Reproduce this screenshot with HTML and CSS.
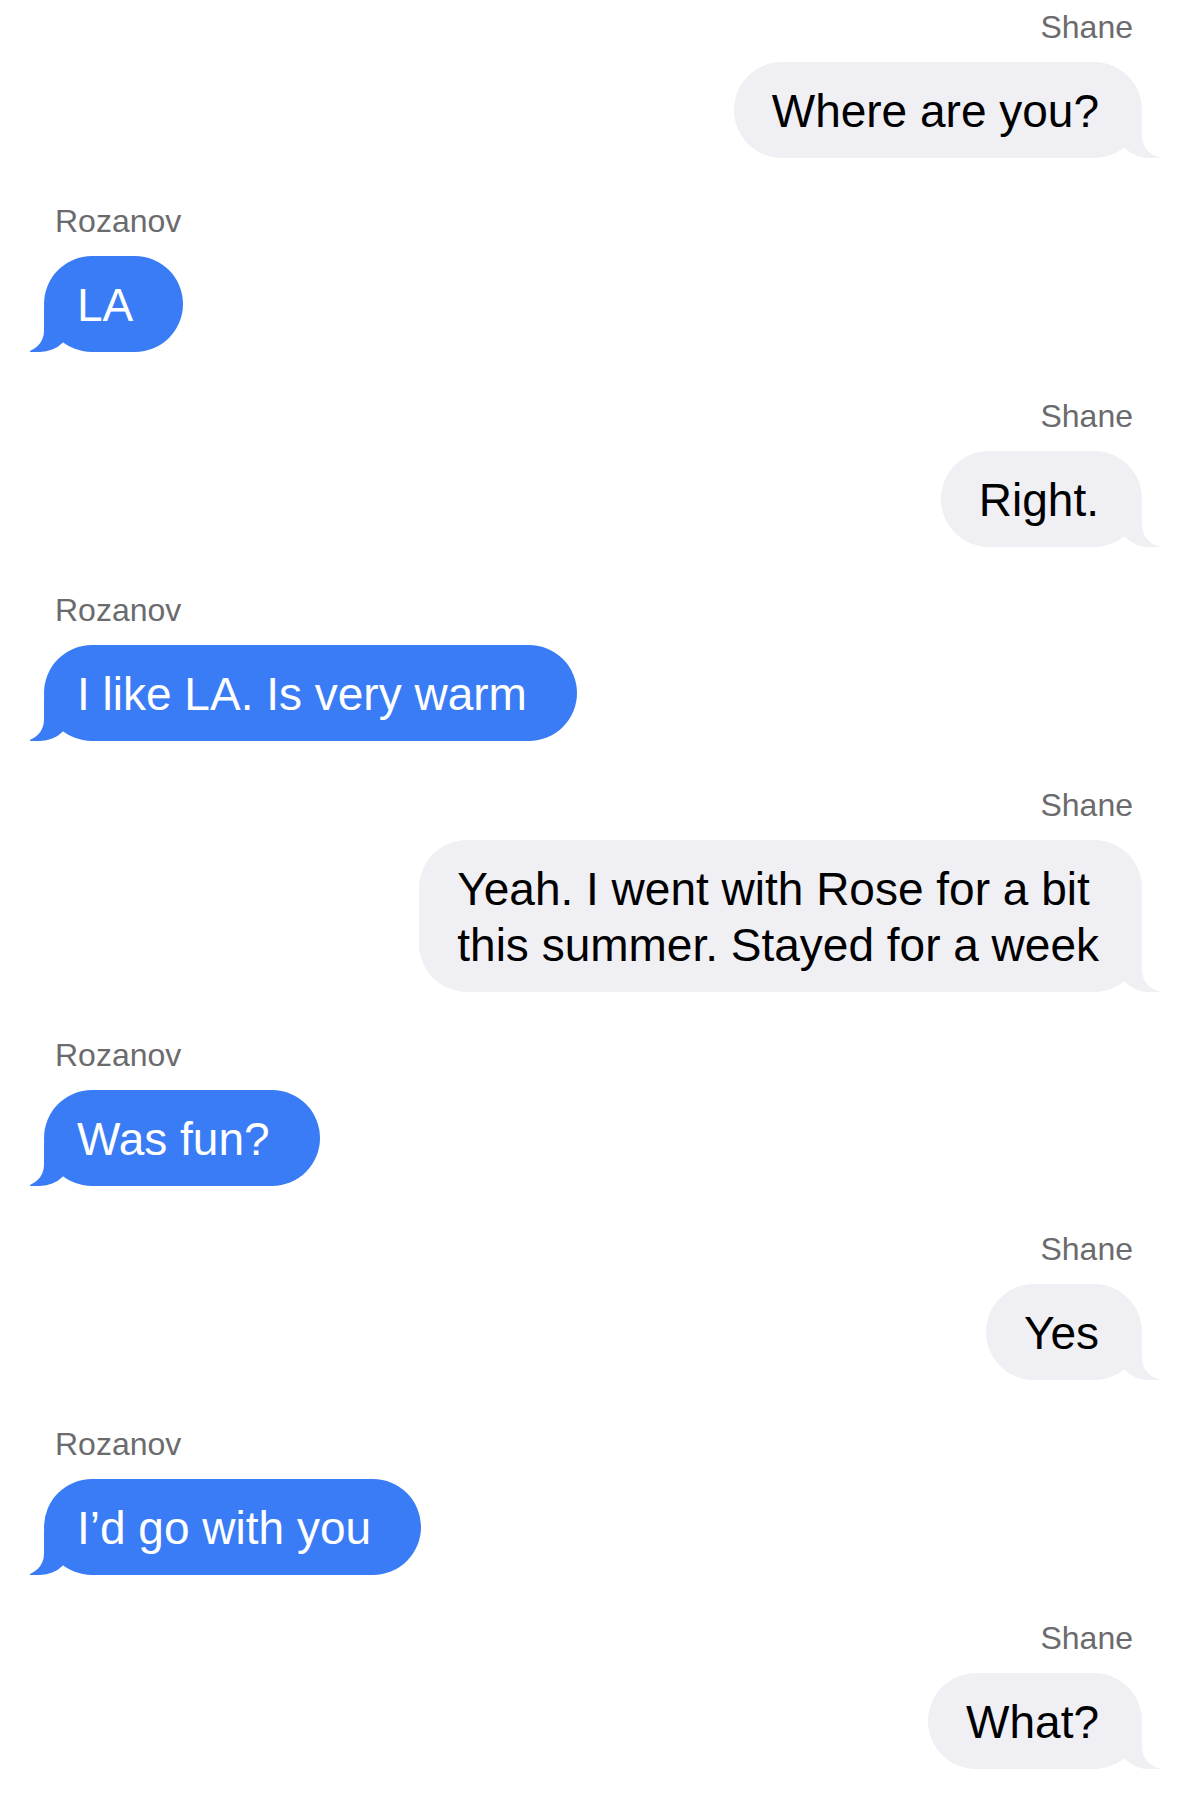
FILE: index.html
```html
<!DOCTYPE html>
<html lang="en">
<head>
    <meta charset="UTF-8">
    <meta name="viewport" content="width=device-width, initial-scale=1.0">
    <title>Messages</title>
    <link rel="stylesheet" href="styles.css">
</head>
<body>
    <div id="thread">
        <div class="message sent">
            <div class="sender">Shane</div>
            <div class="bubble">Where are you?</div>
        </div>
        <div class="message received">
            <div class="sender">Rozanov</div>
            <div class="bubble">LA</div>
        </div>
        <div class="message sent">
            <div class="sender">Shane</div>
            <div class="bubble">Right.</div>
        </div>
        <div class="message received">
            <div class="sender">Rozanov</div>
            <div class="bubble">I like LA. Is very warm</div>
        </div>
        <div class="message sent">
            <div class="sender">Shane</div>
            <div class="bubble">Yeah. I went with Rose for a bit<br>this summer. Stayed for a week</div>
        </div>
        <div class="message received">
            <div class="sender">Rozanov</div>
            <div class="bubble">Was fun?</div>
        </div>
        <div class="message sent">
            <div class="sender">Shane</div>
            <div class="bubble">Yes</div>
        </div>
        <div class="message received">
            <div class="sender">Rozanov</div>
            <div class="bubble">I’d go with you</div>
        </div>
        <div class="message sent">
            <div class="sender">Shane</div>
            <div class="bubble">What?</div>
        </div>
    </div>
</body>
</html>
```

FILE: styles.css
```css
body {
    margin: 0;
    background-color: white;
    font-family: "Liberation Sans", Arial, sans-serif;
}
#thread {
    display: flex;
    flex-direction: column;
    padding: 8px 46px 0 44px;
}
.message {
    display: flex;
    flex-direction: column;
    margin-bottom: 44.4px;
}
.message.sent {
    align-items: flex-end;
}
.message.received {
    align-items: flex-start;
}
.sender {
    font-size: 32px;
    line-height: 38px;
    color: #6b6b6e;
    margin-bottom: 16px;
}
.sent .sender {
    padding-right: 9px;
}
.received .sender {
    padding-left: 11px;
}
.bubble {
    position: relative; /* anchor for the tail */
    font-size: 46px;
    line-height: 56px;
    border-radius: 48px;
    white-space: nowrap;
}
.sent .bubble {
    padding: 21px 43px 19px 38px;
    background-color: #efeff4;
    color: black;
}
.received .bubble {
    padding: 21px 50px 19px 33px;
    background-color: #3a7cf5;
    color: white;
}

/* the little tail under the corner */
.bubble:before,
.bubble:after {
    content: "";
    position: absolute;
    bottom: 0;
    height: 44px;
}
.sent .bubble:before {
    right: -18px;
    width: 45px;
    background-color: #efeff4;
    border-bottom-left-radius: 34px;
}
.sent .bubble:after {
    right: -22px;
    width: 22px;
    background-color: white;
    border-bottom-left-radius: 22px;
}
.received .bubble:before {
    left: -14px;
    width: 42px;
    background-color: #3a7cf5;
    border-bottom-right-radius: 32px;
}
.received .bubble:after {
    left: -21px;
    width: 21px;
    background-color: white;
    border-bottom-right-radius: 21px;
}
```
